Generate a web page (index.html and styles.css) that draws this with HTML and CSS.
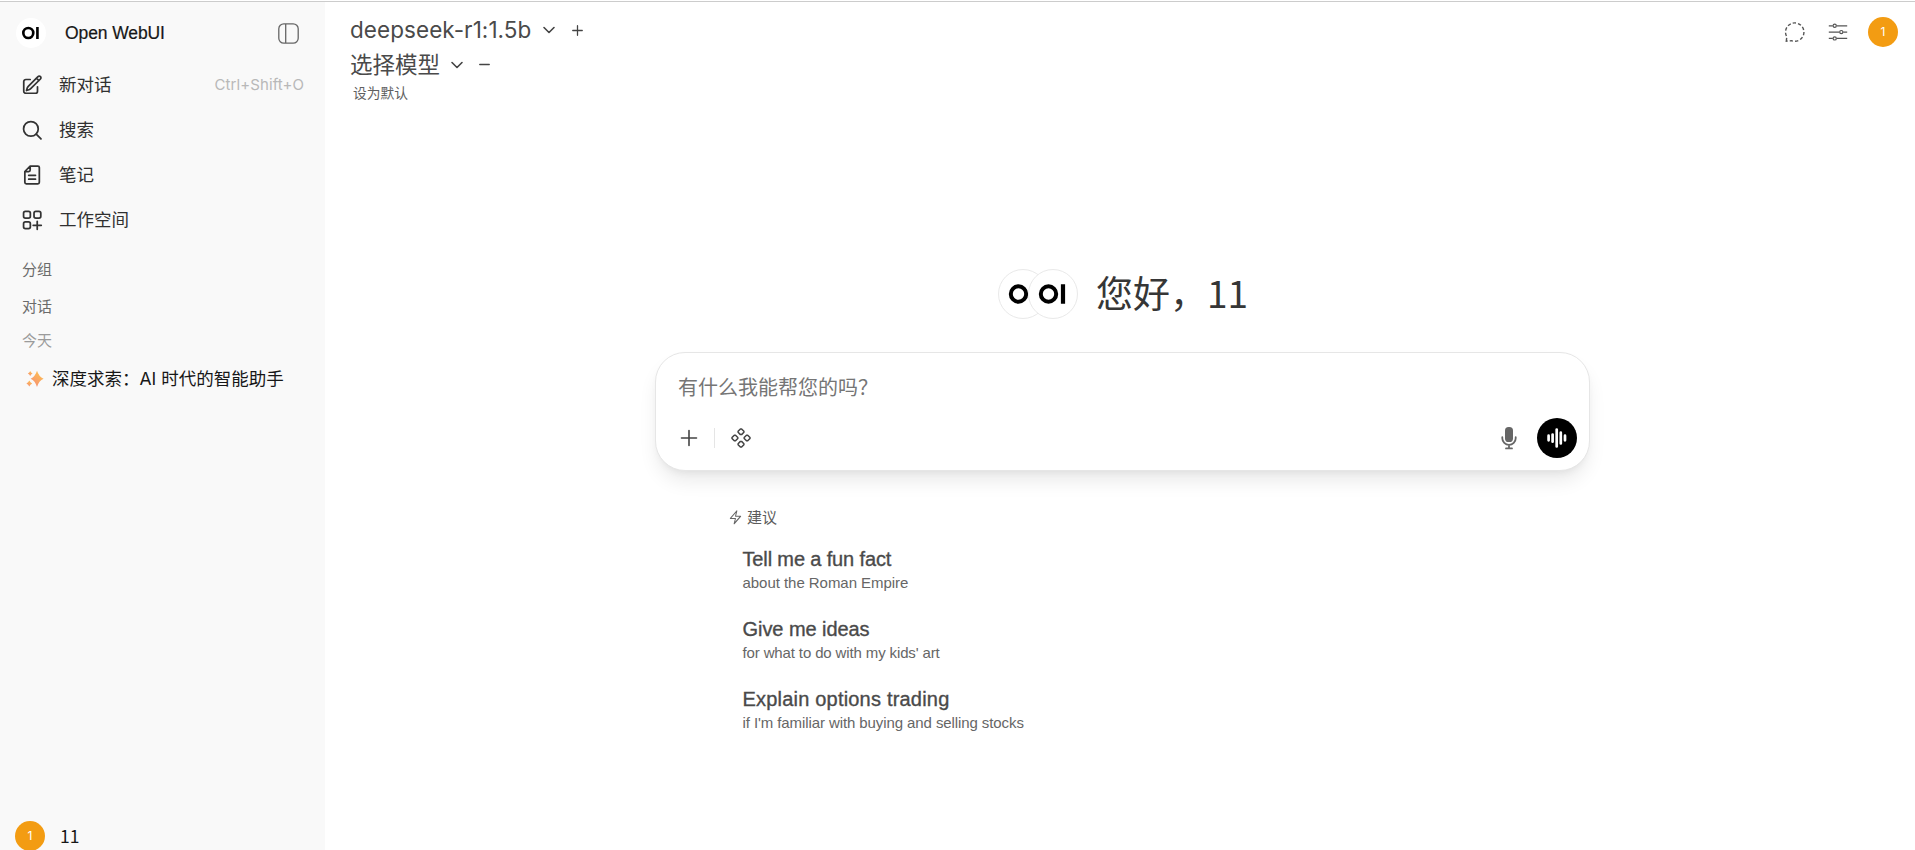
FILE: index.html
```html
<!DOCTYPE html>
<html lang="zh-CN">
<head>
<meta charset="utf-8">
<title>Open WebUI</title>
<link rel="stylesheet" href="styles.css">
</head>
<body>
<div class="app">
  <aside class="sidebar">
    <header class="brand">
      <span class="brand-logo"><svg width="30" height="30" viewBox="0 0 50 50"><circle cx="20.5" cy="25" r="8.3" fill="none" stroke="#000" stroke-width="4.4"/><path d="M35.7 15v20" stroke="#000" stroke-width="4.4"/></svg></span>
      <span class="brand-name">Open WebUI</span>
      <svg class="toggle" width="21" height="21" viewBox="0 0 21 21" fill="none" stroke="#666" stroke-width="1.3"><rect x=".8" y=".8" width="19.4" height="19.4" rx="5"/><path d="M7.7 1v19"/></svg>
    </header>
    <nav class="nav">
      <a class="nav-item"><svg class="nav-icon" viewBox="0 0 24 24"><path d="m16.862 4.487 1.687-1.688a1.875 1.875 0 1 1 2.652 2.652L10.582 16.07a4.5 4.5 0 0 1-1.897 1.13L6 18l.8-2.685a4.5 4.5 0 0 1 1.13-1.897l8.932-8.931Zm0 0L19.5 7.125M18 14v4.75A2.25 2.25 0 0 1 15.75 21H5.25A2.25 2.25 0 0 1 3 18.75V8.25A2.25 2.25 0 0 1 5.25 6H10"/></svg><span>新对话</span><kbd class="shortcut">Ctrl+Shift+O</kbd></a>
      <a class="nav-item"><svg class="nav-icon" viewBox="0 0 24 24"><circle cx="10.8" cy="10.8" r="8"/><path d="m16.6 16.6 5.2 5.2"/></svg><span>搜索</span></a>
      <a class="nav-item"><svg class="nav-icon" viewBox="0 0 24 24"><path d="M4.2 8.2V20a1.6 1.6 0 0 0 1.6 1.6h12.6A1.6 1.6 0 0 0 20 20V3.8a1.6 1.6 0 0 0-1.6-1.6H10L4.2 8.2h4.2A1.6 1.6 0 0 0 10 6.6V2.2M8.4 12.3h7.4M8.4 16.6h7.4"/></svg><span>笔记</span></a>
      <a class="nav-item"><svg class="nav-icon" viewBox="0 0 24 24"><rect x="2.8" y="2.6" width="7.4" height="7.4" rx="2"/><rect x="14.2" y="2.6" width="7.4" height="7.4" rx="2"/><rect x="2.8" y="14" width="7.4" height="7.4" rx="2"/><path d="M17.7 13.4v8.8M13.3 17.8h8.8"/></svg><span>工作空间</span></a>
    </nav>
    <div class="section">分组</div>
    <div class="section">对话</div>
    <div class="section section-day">今天</div>
    <a class="chat">
      <svg width="18" height="18" viewBox="0 0 18 18"><defs><linearGradient id="spark" x1="0" y1="1" x2=".6" y2="0"><stop offset="0" stop-color="#f58a7a"/><stop offset="1" stop-color="#fdbe52"/></linearGradient></defs><g fill="url(#spark)"><path d="M11 .8Q12.8 6.7 17.6 8.7 12.8 10.8 11 17 9.2 10.8 4.6 8.7 9.2 6.7 11 .8Z"/><path d="M4.2 1Q4.9 2.9 6.6 3.5 4.9 4.2 4.2 6 3.5 4.2 1.8 3.5 3.5 2.9 4.2 1Z"/><path d="M3.3 10.6Q4.2 12.8 6.2 13.6 4.2 14.5 3.3 16.6 2.4 14.5.4 13.6 2.4 12.8 3.3 10.6Z"/></g></svg>
      <span class="chat-title">深度求索：AI 时代的智能助手</span>
    </a>
    <footer class="user"><span class="avatar">1</span><span class="user-name">11</span></footer>
  </aside>

  <main class="main">
    <header class="topbar">
      <div class="models">
        <div class="model"><span class="model-name">deepseek-r1:1.5b</span><svg class="chev" viewBox="0 0 12 8"><path d="m1 1.5 5 5 5-5"/></svg><svg class="sign" viewBox="0 0 12 12"><path d="M6 .8v10.4M.8 6h10.4"/></svg></div>
        <div class="model model-empty"><span>选择模型</span><svg class="chev" viewBox="0 0 12 8"><path d="m1 1.5 5 5 5-5"/></svg><svg class="sign" viewBox="0 0 12 12"><path d="M.8 6h10.4"/></svg></div>
        <div class="default">设为默认</div>
      </div>
      <div class="actions">
        <svg width="22" height="22" viewBox="0 0 22 22" fill="none" stroke="#555" stroke-width="1.4" stroke-dasharray="3.3 2.1"><path d="M2.3 20.2 2.8 15.8A9.2 9.2 0 1 1 7.4 19.7L2.3 20.2Z"/></svg>
        <svg class="sliders" width="20" height="18" viewBox="0 0 20 18" fill="none" stroke="#555" stroke-width="1.2"><path d="M.8 2.8h4M8.6 2.8h10.6M.8 9.1h10.6M15.2 9.1h4M.8 15.4h4M8.6 15.4h10.6"/><circle cx="6.7" cy="2.8" r="1.6"/><circle cx="13.3" cy="9.1" r="1.6"/><circle cx="6.7" cy="15.4" r="1.6"/></svg>
        <span class="avatar">1</span>
      </div>
    </header>

    <section class="hero">
      <div class="logos">
        <span class="logo"><svg width="48" height="48" viewBox="0 0 48 48"><circle cx="19.5" cy="24" r="7.7" fill="none" stroke="#000" stroke-width="4"/><path d="M34 14.3v19.4" stroke="#000" stroke-width="4.2"/></svg></span>
        <span class="logo"><svg width="48" height="48" viewBox="0 0 48 48"><circle cx="19.5" cy="24" r="7.7" fill="none" stroke="#000" stroke-width="4"/><path d="M34 14.3v19.4" stroke="#000" stroke-width="4.2"/></svg></span>
      </div>
      <h1 class="greeting">您好，11</h1>
    </section>

    <section class="composer">
      <div class="placeholder">有什么我能帮您的吗？</div>
      <div class="tools">
        <svg width="18" height="18" viewBox="0 0 18 18" stroke="#444" stroke-width="1.6" stroke-linecap="round"><path d="M9 1.5v15M1.5 9h15"/></svg>
        <span class="divider"></span>
        <svg width="20" height="20" viewBox="0 0 20 20" fill="none" stroke="#444" stroke-width="1.5" stroke-linejoin="round"><path id="gem" d="M9.4 1h1.2l2.3 2.3v1L10.6 6.6H9.4L7.1 4.3v-1Z"/><use href="#gem" x="-6.1" y="6.2"/><use href="#gem" x="6.1" y="6.2"/><use href="#gem" y="12.4"/></svg>
        <svg class="mic" width="16" height="24" viewBox="0 0 16 24" fill="none" stroke="#666" stroke-width="1.8" stroke-linecap="round"><rect x="4" y="1" width="8" height="15" rx="3.6" fill="#666" stroke="none"/><path d="M1.3 11.2v1a6.7 6.7 0 0 0 13.4 0v-1M8 19v3.2M5 22.4h6"/></svg>
        <span class="voice"><svg width="20" height="20" viewBox="0 0 20 20" stroke="#fff" stroke-width="2.7" stroke-linecap="round"><path d="M1.6 7.7v4.6M5.6 6.5v7.2M9.7 1.6v16.8M13.8 4.7v10.8M18 7.7v4.6"/></svg></span>
      </div>
    </section>

    <section class="suggestions">
      <div class="suggest-head"><svg width="13" height="15" viewBox="0 0 24 24" preserveAspectRatio="none" fill="none" stroke="#666" stroke-width="1.8" stroke-linejoin="round"><path d="m2.5 13.5 12-12L12 10h9.5l-12 12L12 13.5Z"/></svg><span>建议</span></div>
      <div class="suggest"><div class="suggest-title t1">Tell me a fun fact</div><div class="suggest-sub">about the Roman Empire</div></div>
      <div class="suggest"><div class="suggest-title t2">Give me ideas</div><div class="suggest-sub s2">for what to do with my kids' art</div></div>
      <div class="suggest"><div class="suggest-title t3">Explain options trading</div><div class="suggest-sub s3">if I'm familiar with buying and selling stocks</div></div>
    </section>
  </main>
</div>
</body>
</html>
```
FILE: styles.css
```css
* { box-sizing: border-box; }
body { margin: 0; background: #fff; font-family: "Liberation Sans", "Noto Sans CJK SC", sans-serif; color: #171717; overflow: hidden; white-space: nowrap; }
svg { display: block; flex: none; overflow: visible; }
.app { display: flex; height: 849px; margin-top: 1px; border-top: 1px solid #ccc; }

.sidebar { width: 325px; flex: none; height: 848px; background: #f9f9f9; display: flex; flex-direction: column; }
.brand { display: flex; align-items: center; height: 60px; padding: 2px 26px 0 16px; }
.brand-logo { width: 30px; height: 30px; border-radius: 50%; background: #fff; }
.brand-name { margin-left: 19px; font-size: 17.5px; letter-spacing: -.1px; -webkit-text-stroke: .2px; }
.toggle { margin-left: auto; }
.nav-item { display: flex; align-items: center; height: 45px; padding: 0 21px; font: 17.5px/26px "Noto Sans CJK SC", sans-serif; color: #303030; }
.nav-item span { margin-top: -1px; }
.nav-icon { width: 22px; height: 22px; margin-right: 16px; fill: none; stroke: #333; stroke-width: 1.9; stroke-linecap: round; stroke-linejoin: round; }
.shortcut { margin-left: auto; font: 15px Inter, sans-serif; letter-spacing: .08px; color: #b8b8b8; }
.section { height: 37px; padding: 0 22px; font: 15px/37px "Noto Sans CJK SC", sans-serif; color: #6b6b6b; }
.nav + .section { margin-top: 8px; }
.section-day { height: 32px; line-height: 32px; color: #9b9b9b; }
.chat { display: flex; align-items: center; gap: 8px; height: 44px; padding: 1px 0 0 26px; }
.chat-title { font: 17.5px/26px Inter, "Noto Sans CJK SC", sans-serif; }
.user { display: flex; align-items: center; gap: 15px; height: 30px; margin: auto 0 -1px; padding-left: 15px; }
.user-name { font: 17.5px/26px "Noto Sans CJK SC", sans-serif; margin-top: -1px; }
.avatar { display: flex; align-items: center; justify-content: center; width: 30px; height: 30px; border-radius: 50%; background: #f39c12; color: #fff; font: 12px/30px Inter, sans-serif; }

.main { flex: 1; min-width: 0; display: flex; flex-direction: column; }
.topbar { display: flex; justify-content: space-between; align-items: flex-start; height: 267px; padding: 10px 17px 0 25px; }
.model { display: flex; align-items: center; height: 36px; font: 22.5px/34px Inter, "Noto Sans CJK SC", sans-serif; color: #4a4a4a; }
.model-name { letter-spacing: .06px; }
.model-empty { height: 33px; }
.chev { width: 12px; height: 8px; margin-left: 12px; fill: none; stroke: #444; stroke-width: 1.6; stroke-linecap: round; stroke-linejoin: round; }
.sign { width: 11px; height: 11px; margin-left: 17px; fill: none; stroke: #444; stroke-width: 1.4; stroke-linecap: round; }
.model-empty .chev { margin-left: 11px; }
.model-empty .sign { margin-left: 16px; }
.default { padding-left: 3px; font: 13.75px/22px "Noto Sans CJK SC", sans-serif; color: #606060; }
.actions { display: flex; align-items: center; height: 30px; margin-top: 5px; }
.sliders { margin-left: 22px; }
.actions .avatar { margin-left: 20px; }

.hero { display: flex; align-items: center; height: 50px; padding-left: 673px; }
.logos { display: flex; }
.logo { width: 50px; height: 50px; border: 1px solid #e9e9e9; border-radius: 50%; background: #fff; overflow: hidden; }
.logo + .logo { margin-left: -20px; }
.greeting { margin: -4px 0 0 18px; font: 37px/50px "Noto Sans CJK SC", sans-serif; color: #363636; }

.composer { width: 935px; height: 119px; margin: 33px 0 0 330px; padding: 19px 12px 0 23px; border: 1px solid #e6e6e6; border-radius: 30px; background: #fff; box-shadow: 0 12px 20px -3px rgba(0,0,0,.09), 0 4px 8px -4px rgba(0,0,0,.08); }
.placeholder { height: 30px; margin-left: -1px; font: 20px/30px "Noto Sans CJK SC", sans-serif; color: #757575; }
.tools { display: flex; align-items: center; height: 40px; margin-top: 16px; padding-left: 1px; }
.divider { width: 1px; height: 20px; margin: 0 16px; background: #e5e5e5; }
.mic { margin-left: auto; }
.voice { display: flex; align-items: center; justify-content: center; width: 40px; height: 40px; margin-left: 20px; border-radius: 50%; background: #000; }

.suggestions { margin: 33px 0 0 404px; }
.suggest-head { display: flex; align-items: center; gap: 5px; height: 26px; font: 15px/26px "Noto Sans CJK SC", sans-serif; color: #5c5c5c; }
.suggest { height: 70px; padding: 16px 0 0 13.5px; }
.suggest-title { font-size: 20px; line-height: 26px; color: #4a4a4a; -webkit-text-stroke: .35px; }
.t1 { letter-spacing: -.14px; }
.t2 { letter-spacing: -.06px; }
.t3 { letter-spacing: .2px; }
.suggest-sub { font-size: 15px; line-height: 22px; letter-spacing: -.04px; color: #666; }
.s2 { letter-spacing: -.13px; }
.s3 { letter-spacing: -.09px; }
```
